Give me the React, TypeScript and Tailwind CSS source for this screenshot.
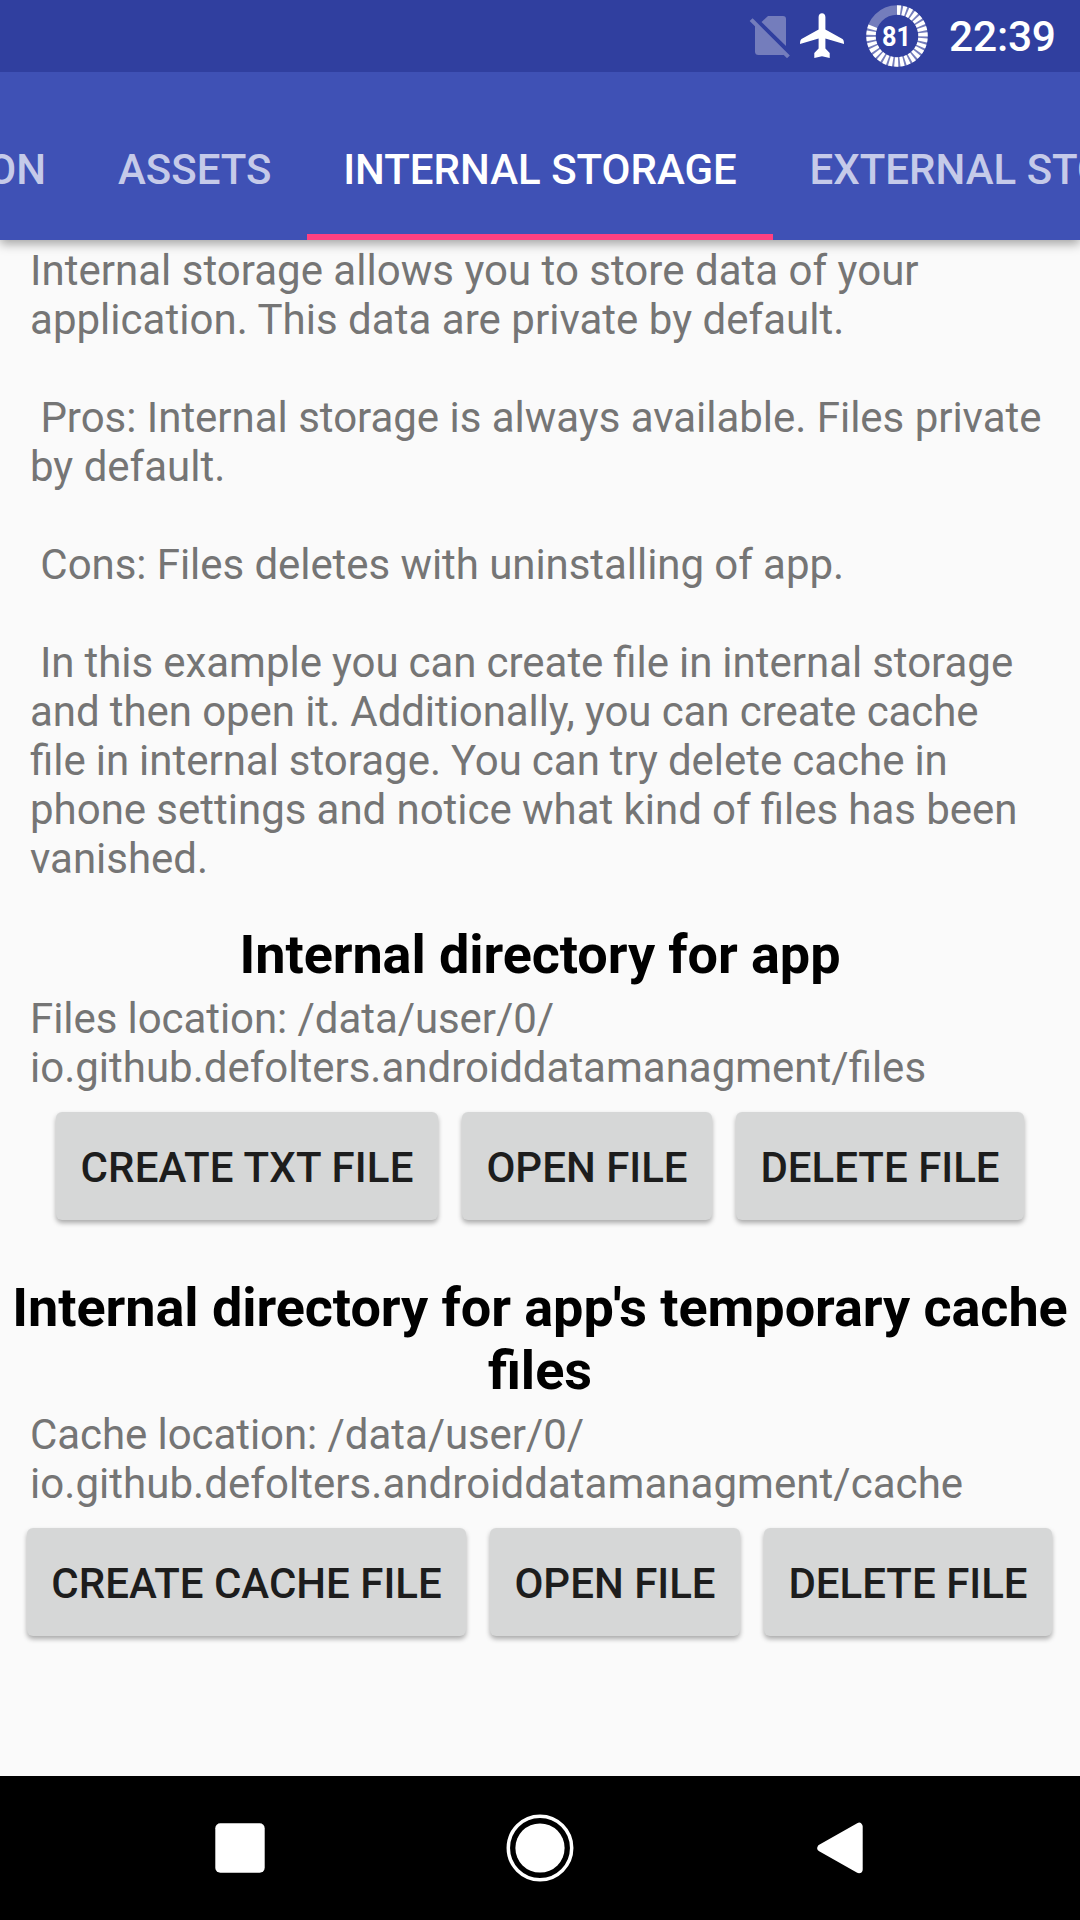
type Line = { text: string; spacing?: string };

const intro: Line[] = [
  { text: "Internal storage allows you to store data of your", spacing: "tracking-[0.02px]" },
  { text: "application. This data are private by default.", spacing: "tracking-[0.03px]" },
  { text: "" },
  { text: " Pros: Internal storage is always available. Files private", spacing: "tracking-[-0.02px]" },
  { text: "by default." },
  { text: "" },
  { text: " Cons: Files deletes with uninstalling of app.", spacing: "tracking-[-0.06px]" },
  { text: "" },
  { text: " In this example you can create file in internal storage", spacing: "[word-spacing:-0.5px]" },
  { text: "and then open it. Additionally, you can create cache", spacing: "tracking-[-0.08px]" },
  { text: "file in internal storage. You can try delete cache in", spacing: "[word-spacing:-0.5px]" },
  { text: "phone settings and notice what kind of files has been", spacing: "[word-spacing:-0.25px]" },
  { text: "vanished." },
];

function Button({ label, width, spacing = "" }: { label: string; width: string; spacing?: string }) {
  return (
    <button className={`${width} ${spacing} h-[108px] rounded-[6px] bg-[#d6d7d7] pt-[2px] text-[42px] font-medium whitespace-nowrap text-[#1d1d1d] shadow-[0_3px_5px_rgba(0,0,0,0.32)]`}>
      {label}
    </button>
  );
}

function Copy({ lines }: { lines: Line[] }) {
  return (
    <div className="px-[30px] text-[42px] leading-[49px] whitespace-pre text-[#757575]">
      {lines.map((line, i) => (
        <p key={i} className={`h-[49px] ${line.spacing ?? ""}`}>{line.text}</p>
      ))}
    </div>
  );
}

export default function App() {
  return (
    <div className="flex h-[1920px] w-[1080px] flex-col overflow-hidden bg-[#fafafa] font-[Roboto,sans-serif]">
      <header className="flex h-[72px] shrink-0 items-center justify-end bg-[#303f9f] text-white">
        <svg className="h-[72px] w-[190px] shrink-0" viewBox="740 0 190 72">
          <g fill="#747dbc">
            <path d="M768 16H783Q786 16 786 19V46L761.500 22Z" />
            <path d="M755 23L785.500 54Q784.500 55 783 55H758.500Q755 55 755 51.500Z" />
          </g>
          <path d="M752.500 21L787 55.500" stroke="#747dbc" strokeWidth="4" strokeLinecap="square" />
          <path d="M822 13.300C824 13.300 825.400 15 825.400 17V29.500L842.500 39Q844 40 844 44L825.400 38.500V48.500L829.700 53V58L822 56.300L814.300 58V53L818.600 48.500V38.500L800 44Q800 40 801.500 39L818.600 29.500V17C818.600 15 820 13.300 822 13.300Z" fill="#fff" />
          <circle cx="897" cy="36" r="26" fill="none" stroke="#747dbc" strokeWidth="9.500" />
          <path d="M897 10A26 26 0 1 1 872.900 26.260" fill="none" stroke="#fff" strokeWidth="9.500" pathLength="296" strokeDasharray="8 4" />
          <text x="896.500" y="46" textAnchor="middle" fill="#fff" fontSize="28" fontWeight="700" textLength="29" lengthAdjust="spacingAndGlyphs">81</text>
        </svg>
        <span className="w-[150px] shrink-0 pt-[2px] pl-[19px] text-[42.5px] font-medium tracking-[-0.2px]">22:39</span>
      </header>
      <nav className="relative h-[168px] shrink-0 bg-[#3f51b5] shadow-[0_4px_10px_rgba(0,0,0,0.35)] [clip-path:inset(0_0_-20px_0)]">
        <div className="flex h-[168px] w-[1080px] overflow-hidden text-[42px] leading-[196px] font-medium whitespace-nowrap text-[#c5cae9]">
          <span className="flex w-[82px] shrink-0 justify-end pr-[36px]">ON</span>
          <span className="w-[225px] shrink-0 pl-[36px]">ASSETS</span>
          <span className="h-[168px] w-[466px] shrink-0 border-b-[6px] border-[#ff4081] text-center text-white">INTERNAL STORAGE</span>
          <span className="shrink-0 pl-[36.5px]">EXTERNAL STORAGE</span>
        </div>
      </nav>
      <main className="h-[1536px] shrink-0 pt-[6px]">
        <Copy lines={intro} />
        <h1 className="mt-[41px] text-center text-[54px] leading-[62px] font-bold tracking-[-0.08px]">Internal directory for app</h1>
        <div className="mt-2">
          <Copy lines={[{ text: "Files location: /data/user/0/", spacing: "tracking-[-0.07px]" }, { text: "io.github.defolters.androiddatamanagment/files" }]} />
        </div>
        <div className="mt-[20px] flex justify-center gap-6">
          <Button width="w-[382px]" label="CREATE TXT FILE" spacing="tracking-[0.2px]" />
          <Button width="w-[250px]" label="OPEN FILE" />
          <Button width="w-[288px]" label="DELETE FILE" />
        </div>
        <h2 className="mt-[56px] text-center text-[54px] leading-[63px] font-bold">
          <span className="block tracking-[-0.06px]">Internal directory for app's temporary cache</span>
          <span className="block">files</span>
        </h2>
        <div className="mt-2">
          <Copy lines={[{ text: "Cache location: /data/user/0/", spacing: "tracking-[-0.07px]" }, { text: "io.github.defolters.androiddatamanagment/cache", spacing: "tracking-[0.05px]" }]} />
        </div>
        <div className="mt-[20px] flex gap-6 pl-[27px]">
          <Button width="w-[439px]" label="CREATE CACHE FILE" />
          <Button width="w-[250px]" label="OPEN FILE" />
          <Button width="w-[288px]" label="DELETE FILE" />
        </div>
      </main>
      <footer className="h-36 shrink-0 bg-black">
        <svg className="h-36 w-full" viewBox="0 1776 1080 144" fill="#fff">
          <rect x="215.300" y="1823.300" width="49.400" height="49.400" rx="5" />
          <circle cx="540" cy="1848" r="24.600" />
          <circle cx="540" cy="1848" r="31.700" fill="none" stroke="#fff" strokeWidth="3.500" />
          <path d="M821 1848L859 1826.500V1869.500Z" stroke="#fff" strokeWidth="7.400" strokeLinejoin="round" />
        </svg>
      </footer>
    </div>
  );
}
